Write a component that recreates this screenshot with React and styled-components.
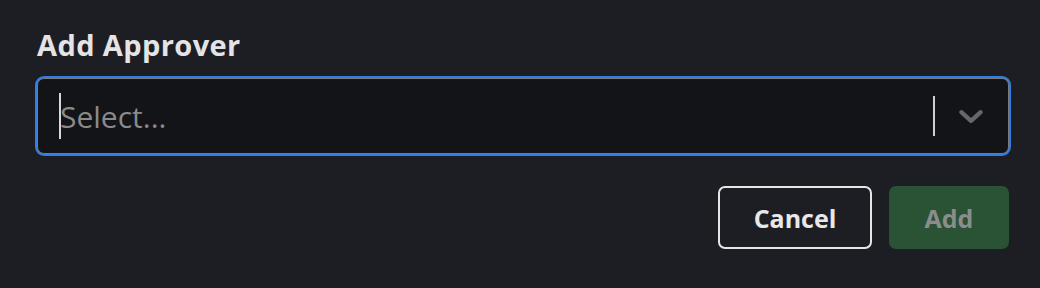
import React from 'react'
import styled, { createGlobalStyle } from 'styled-components'

const GlobalStyle = createGlobalStyle`
  html, body {
    margin: 0;
    padding: 0;
    background: #1d1e23;
  }
  body {
    font-family: "Open Sans", "Liberation Sans", sans-serif;
  }
`

const App = () => {
  return (
    <Page>
      <GlobalStyle />
      <Title>Add Approver</Title>
      <SelectBox>
        <ValueArea>
          <Caret />
          <Placeholder>Select...</Placeholder>
        </ValueArea>
        <Indicators>
          <Separator />
          <Chevron viewBox="0 0 24 14">
            <path d="M3 3 L12 11 L21 3" fill="none" stroke="#66676a" strokeWidth="4" strokeLinecap="round" strokeLinejoin="round" />
          </Chevron>
        </Indicators>
      </SelectBox>
      <Actions>
        <Button>Cancel</Button>
        <Button primary>Add</Button>
      </Actions>
    </Page>
  )
}

export default App

const Page = styled.div`
  width: 1040px;
  height: 288px;
  box-sizing: border-box;
  padding: 25px 31px 0 37px;
  display: flex;
  flex-direction: column;
`

const Title = styled.div`
  font-size: 29px;
  font-weight: 700;
  color: #e4e4e6;
  line-height: 40px;
  margin-bottom: 13px;
  letter-spacing: 0.4px;
`

const SelectBox = styled.div`
  height: 76px;
  box-sizing: border-box;
  border: 1px solid #7a7a7c;
  border-radius: 7px;
  box-shadow: 0 0 0 2px #2f7ee3;
  background: #131417;
  display: flex;
  align-items: center;
`

const ValueArea = styled.div`
  flex: 1;
  display: flex;
  align-items: center;
  padding-left: 21px;
`

const Caret = styled.div`
  width: 2px;
  height: 46px;
  background: #d8d8d8;
`

const Placeholder = styled.div`
  font-size: 30px;
  font-weight: 400;
  color: #8a8a8c;
  margin-left: -1px;
`

const Indicators = styled.div`
  display: flex;
  align-items: center;
  height: 100%;
`

const Separator = styled.div`
  width: 2px;
  height: 40px;
  background: #cfcfd0;
`

const Chevron = styled.svg`
  width: 26px;
  height: 15px;
  margin: 0 24px 0 23px;
`

const Actions = styled.div`
  display: flex;
  justify-content: flex-end;
  gap: 17px;
  margin-top: 32px;
`

const Button = styled.button`
  height: 63px;
  width: ${p => (p.primary ? '120px' : '154px')};
  box-sizing: border-box;
  padding: 0;
  border-radius: 7px;
  font-family: inherit;
  font-size: 25px;
  font-weight: 700;
  border: ${p => (p.primary ? '2px solid #2a5234' : '2px solid #e6e6e8')};
  background: ${p => (p.primary ? '#2a5234' : '#1d1e23')};
  color: ${p => (p.primary ? '#8a8d8b' : '#e8e8ea')};
`
